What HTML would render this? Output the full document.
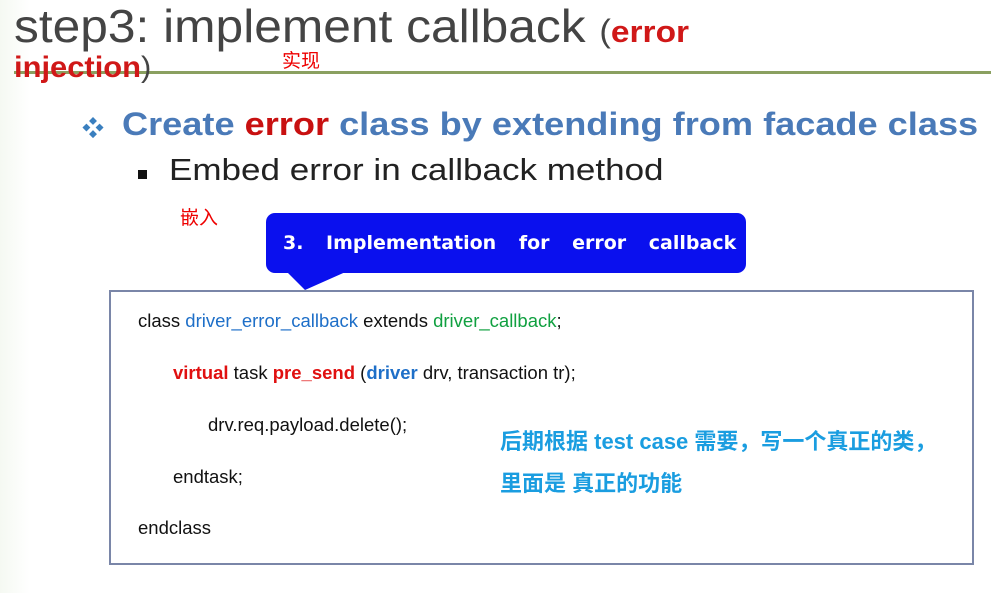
<!DOCTYPE html>
<html><head><meta charset="utf-8"><style>
body{margin:0;width:991px;height:593px;background:#fff;position:relative;overflow:hidden;font-family:"Liberation Sans","Noto Sans CJK SC",sans-serif}
.a{position:absolute;white-space:nowrap}
.sx{transform-origin:0 0}
</style></head><body>
<div class="a" style="left:0;top:0;width:991px;height:593px;background:linear-gradient(90deg,#f5f9f2 0,#fff 3%,#fff 100%)"></div>
<div class="a sx" style="left:14px;top:-1px;font-size:46px;color:#444;transform:scaleX(1.08)">step3: implement callback <span style="font-size:32px">(</span><span style="color:#d01818;font-size:31px;font-weight:bold">error</span></div>
<div class="a" style="left:14px;top:71px;width:977px;height:3px;background:#8aa060"></div>
<div class="a sx" style="left:14px;top:51px;font-size:30px;color:#d01818;font-weight:bold;transform:scaleX(1.03)">injection<span style="color:#444;font-weight:normal">)</span></div>
<div class="a" style="left:282px;top:46px;font-size:19px;color:#e00">实现</div>
<div class="a" style="left:82px;top:111px;font-size:22px;color:#3a7fbf">❖</div>
<div class="a sx" style="left:122px;top:106px;font-size:32px;font-weight:bold;color:#4a7ab8;transform:scaleX(1.13)">Create <span style="color:#c81010">error</span> class by extending from facade class</div>
<div class="a" style="left:138px;top:170px;width:9px;height:9px;background:#111"></div>
<div class="a sx" style="left:169px;top:152px;font-size:31px;color:#222;transform:scaleX(1.13)">Embed error in callback method</div>
<div class="a" style="left:180px;top:203px;font-size:19px;color:#e00">嵌入</div>
<svg class="a" style="left:260px;top:210px" width="495" height="85"><rect x="6" y="3" width="480" height="60" rx="9" fill="#0a10ee"/><polygon points="25,60 90,60 45,80" fill="#0a10ee"/></svg>
<div class="a" style="left:283px;top:232px;font-size:19px;font-weight:bold;color:#fff;font-family:'DejaVu Sans',sans-serif;word-spacing:16px">3. Implementation for error callback</div>
<div class="a" style="left:109px;top:290px;width:861px;height:271px;border:2px solid #7a86a8;background:#fff"></div>
<div class="a" style="left:138px;top:310px;font-size:18.5px;color:#111">class <span style="color:#1e6fc8">driver_error_callback</span> extends <span style="color:#10a040">driver_callback</span>;</div>
<div class="a" style="left:173px;top:362px;font-size:18.5px;color:#111"><span style="color:#e01010;font-weight:bold">virtual</span> task <span style="color:#e01010;font-weight:bold">pre_send</span> (<span style="color:#1e6fc8;font-weight:bold">driver</span> drv, transaction tr);</div>
<div class="a" style="left:208px;top:414px;font-size:18.5px;color:#111">drv.req.payload.delete();</div>
<div class="a" style="left:173px;top:466px;font-size:18.5px;color:#111">endtask;</div>
<div class="a" style="left:138px;top:517px;font-size:18.5px;color:#111">endclass</div>
<div class="a" style="left:500px;top:424px;font-size:22px;font-weight:bold;color:#1a9de0">后期根据 test case 需要，写一个真正的类，</div>
<div class="a" style="left:500px;top:466px;font-size:22px;font-weight:bold;color:#1a9de0">里面是 真正的功能</div>
</body></html>
